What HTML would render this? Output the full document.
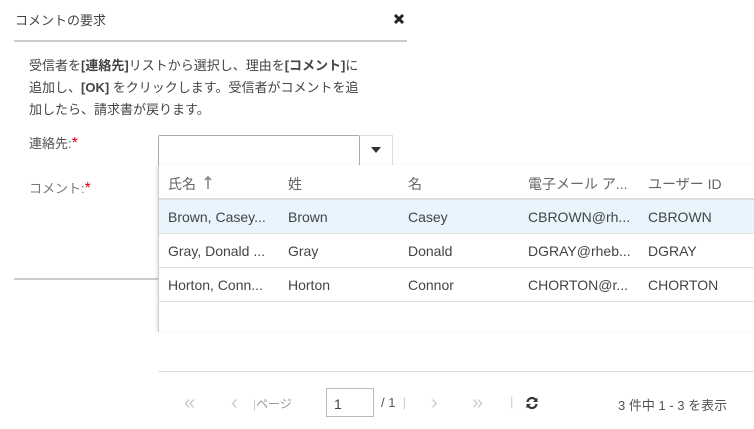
<!DOCTYPE html>
<html><head><meta charset="utf-8"><style>
*{margin:0;padding:0;box-sizing:border-box}
body{width:754px;height:429px;background:#fff;font-family:"Liberation Sans","Noto Sans CJK JP",sans-serif;color:#333;position:relative;overflow:hidden;font-size:13px}
.a{position:absolute;white-space:nowrap}
.star{color:#d0021b;font-size:16px}
.pop{position:absolute;left:158px;top:165px;width:596px;height:167px;background:#fff;border-left:1px solid #ccc;box-shadow:-2px 0 2px rgba(0,0,0,.08)}
.row{position:absolute;left:0;width:596px;height:34px;border-bottom:1px solid #e0e0e0}
.row span{position:absolute;top:9px;font-size:14px;color:#444}
.c1{left:9px}.c2{left:129px}.c3{left:249px}.c4{left:369px}.c5{left:489px}
.g{color:#ccc}
</style></head><body>
<div class="a" style="left:15px;top:10px;font-size:13px;color:#444">コメントの要求</div>
<svg class="a" style="left:393px;top:13px" width="12" height="12" viewBox="0 0 12 12"><path d="M2 2L10 10M10 2L2 10" stroke="#222" stroke-width="3"/></svg>
<div class="a" style="left:14px;top:40px;width:393px;height:2px;background:#ccc"></div>
<div class="a" style="left:29px;top:55px;line-height:22px;font-size:13px;color:#444">受信者を<b>[連絡先]</b>リストから選択し、理由を<b>[コメント]</b>に<br>追加し、<b>[OK]</b> をクリックします。受信者がコメントを追<br>加したら、請求書が戻ります。</div>
<div class="a" style="left:29px;top:133px;color:#555">連絡先:<span class="star">*</span></div>
<div class="a" style="left:29px;top:178px;color:#777">コメント:<span class="star">*</span></div>
<div class="a" style="left:158px;top:135px;width:202px;height:31px;border:1px solid #aaa;border-radius:2px"></div>
<div class="a" style="left:359px;top:135px;width:34px;height:31px;border:1px solid #ddd;border-left:none"></div>
<div class="a" style="left:371px;top:147px;width:0;height:0;border-left:5px solid transparent;border-right:5px solid transparent;border-top:6px solid #333"></div>
<div class="a" style="left:14px;top:278px;width:150px;height:2px;background:#ccc"></div>
<div class="pop">
<div class="row" style="top:0;height:35px;border-bottom:2px solid #ddd"><span class="c1" style="color:#666">氏名</span><svg class="a" style="left:45px;top:11px" width="8" height="13" viewBox="0 0 8 13"><path d="M4 1V13M1 4L4 1L7 4" fill="none" stroke="#888" stroke-width="1.6"/></svg><span class="c2" style="color:#666">姓</span><span class="c3" style="color:#666">名</span><span class="c4" style="color:#666">電子メール ア...</span><span class="c5" style="color:#666">ユーザー ID</span></div>
<div class="row" style="top:35px;background:#e8f5fd"><span class="c1">Brown, Casey...</span><span class="c2">Brown</span><span class="c3">Casey</span><span class="c4">CBROWN@rh...</span><span class="c5">CBROWN</span></div>
<div class="row" style="top:69px"><span class="c1">Gray, Donald ...</span><span class="c2">Gray</span><span class="c3">Donald</span><span class="c4">DGRAY@rheb...</span><span class="c5">DGRAY</span></div>
<div class="row" style="top:103px"><span class="c1">Horton, Conn...</span><span class="c2">Horton</span><span class="c3">Connor</span><span class="c4">CHORTON@r...</span><span class="c5">CHORTON</span></div>
</div>
<div class="a" style="left:158px;top:371px;width:596px;height:1px;background:#ddd"></div>
<div class="a g" style="left:184px;top:392px;font-size:20px">«</div>
<div class="a g" style="left:231px;top:392px;font-size:20px">‹</div>
<div class="a" style="left:253px;top:395px;color:#999;font-size:12px"><span class="g">|</span>ページ</div>
<div class="a" style="left:326px;top:388px;width:48px;height:29px;border:1px solid #bbb;padding:7px 0 0 7px;font-size:14px;color:#444">1</div>
<div class="a" style="left:381px;top:395px;color:#555;font-size:13px">/ 1 <span class="g">&nbsp;|</span></div>
<div class="a g" style="left:431px;top:392px;font-size:20px">›</div>
<div class="a g" style="left:472px;top:392px;font-size:20px">»</div>
<div class="a g" style="left:510px;top:394px">|</div>
<svg class="a" style="left:525px;top:396px" width="14" height="14" viewBox="0 0 14 14"><path d="M2.5 6A4.5 4.5 0 0 1 11 4.5M11.5 8A4.5 4.5 0 0 1 3 9.5" fill="none" stroke="#333" stroke-width="2.2"/><path d="M12.5 1.5v4.5h-4.5zM1.5 12.5v-4.5h4.5z" fill="#333"/></svg>
<div class="a" style="left:618px;top:395px;color:#555;font-size:13px">3 件中 1 - 3 を表示</div>
</body></html>
